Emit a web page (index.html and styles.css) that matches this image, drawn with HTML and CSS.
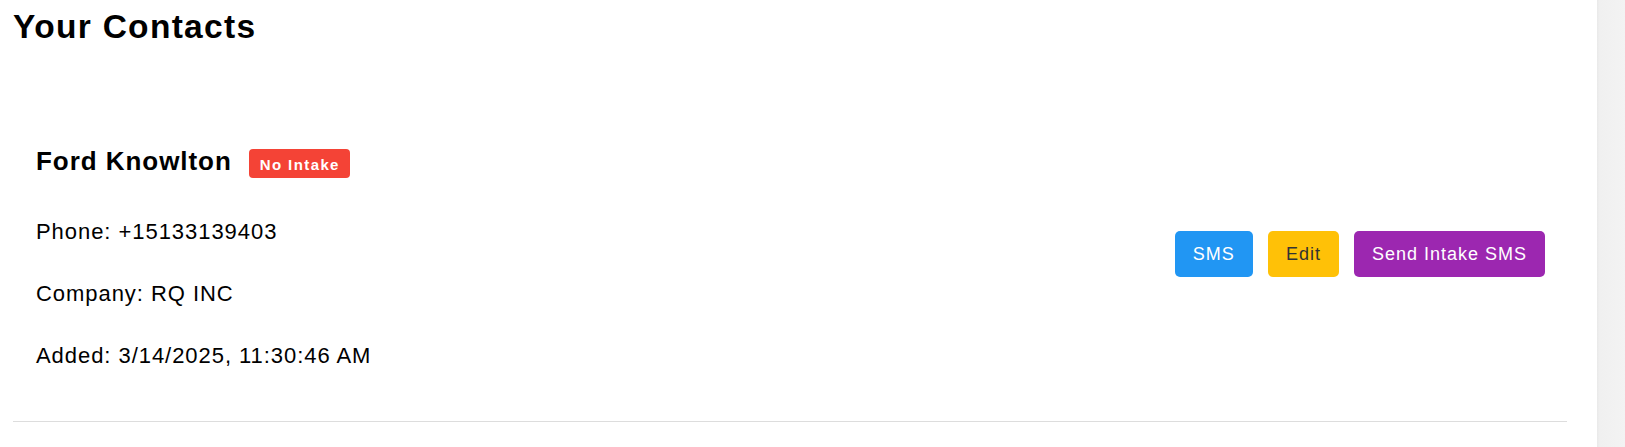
FILE: index.html
```html
<!DOCTYPE html>
<html lang="en">
<head>
<meta charset="utf-8">
<title>Your Contacts</title>
<link rel="stylesheet" href="styles.css">
</head>
<body>
  <main class="page">
    <h1 class="page-title">Your Contacts</h1>
    <section class="contact-list">
      <article class="contact-card">
        <div class="contact-info">
          <div class="contact-head">
            <h3 class="contact-name">Ford Knowlton</h3>
            <span class="badge badge-red">No Intake</span>
          </div>
          <p class="contact-line">Phone: +15133139403</p>
          <p class="contact-line">Company: RQ INC</p>
          <p class="contact-line">Added: 3/14/2025, 11:30:46 AM</p>
        </div>
        <div class="contact-actions">
          <button class="btn btn-blue">SMS</button>
          <button class="btn btn-yellow">Edit</button>
          <button class="btn btn-purple">Send Intake SMS</button>
        </div>
      </article>
    </section>
  </main>
  <aside class="scroll-track"></aside>
</body>
</html>
```

FILE: styles.css
```css
html, body {
  margin: 0;
  padding: 0;
  height: 100%;
}

body {
  display: flex;
  overflow: hidden;
  background: #ffffff;
  color: #000000;
  font-family: "Liberation Sans", Arial, sans-serif;
}

.page {
  flex: 1;
  min-width: 0;
  padding: 0 30px 0 13px;
}

.scroll-track {
  width: 28px;
  flex: none;
  background: linear-gradient(to right, #e9e9e9 0, #f0f0f0 3px, #f3f3f3 100%);
}

.page-title {
  margin: 8px 0 47px;
  font-size: 33.5px;
  font-weight: bold;
  line-height: normal;
  letter-spacing: 1.3px;
}

.contact-card {
  display: flex;
  align-items: center;
  justify-content: space-between;
  padding: 53px 22px 53px 23px;
  border-bottom: 1px solid #dddddd;
}

.contact-info {
  display: flex;
  flex-direction: column;
}

.contact-head {
  display: flex;
  align-items: baseline;
  gap: 17px;
  margin-bottom: 40.5px;
}

.contact-name {
  margin: 0;
  font-size: 26px;
  font-weight: bold;
  line-height: 30px;
  letter-spacing: 0.95px;
}

.badge {
  display: inline-block;
  padding: 7px 10px 5px 11px;
  border-radius: 4px;
  font-size: 15px;
  font-weight: bold;
  line-height: 17px;
  letter-spacing: 1.4px;
  color: #ffffff;
}

.badge-red {
  background: #f44336;
}

.contact-line {
  margin: 0 0 37px;
  font-size: 22px;
  line-height: 25px;
  letter-spacing: 0.95px;
}

.contact-line:last-child {
  margin-bottom: 0;
}

.contact-actions {
  display: flex;
  gap: 15px;
  margin-top: -5px;
}

.btn {
  border: none;
  border-radius: 5px;
  padding: 12px 18px;
  font-family: "Liberation Sans", Arial, sans-serif;
  font-size: 18px;
  line-height: 22px;
  letter-spacing: 1px;
  color: #ffffff;
  cursor: pointer;
}

.btn-blue {
  background: #2196f3;
}

.btn-yellow {
  background: #ffc107;
  color: #333333;
}

.btn-purple {
  background: #9c27b0;
}
```
